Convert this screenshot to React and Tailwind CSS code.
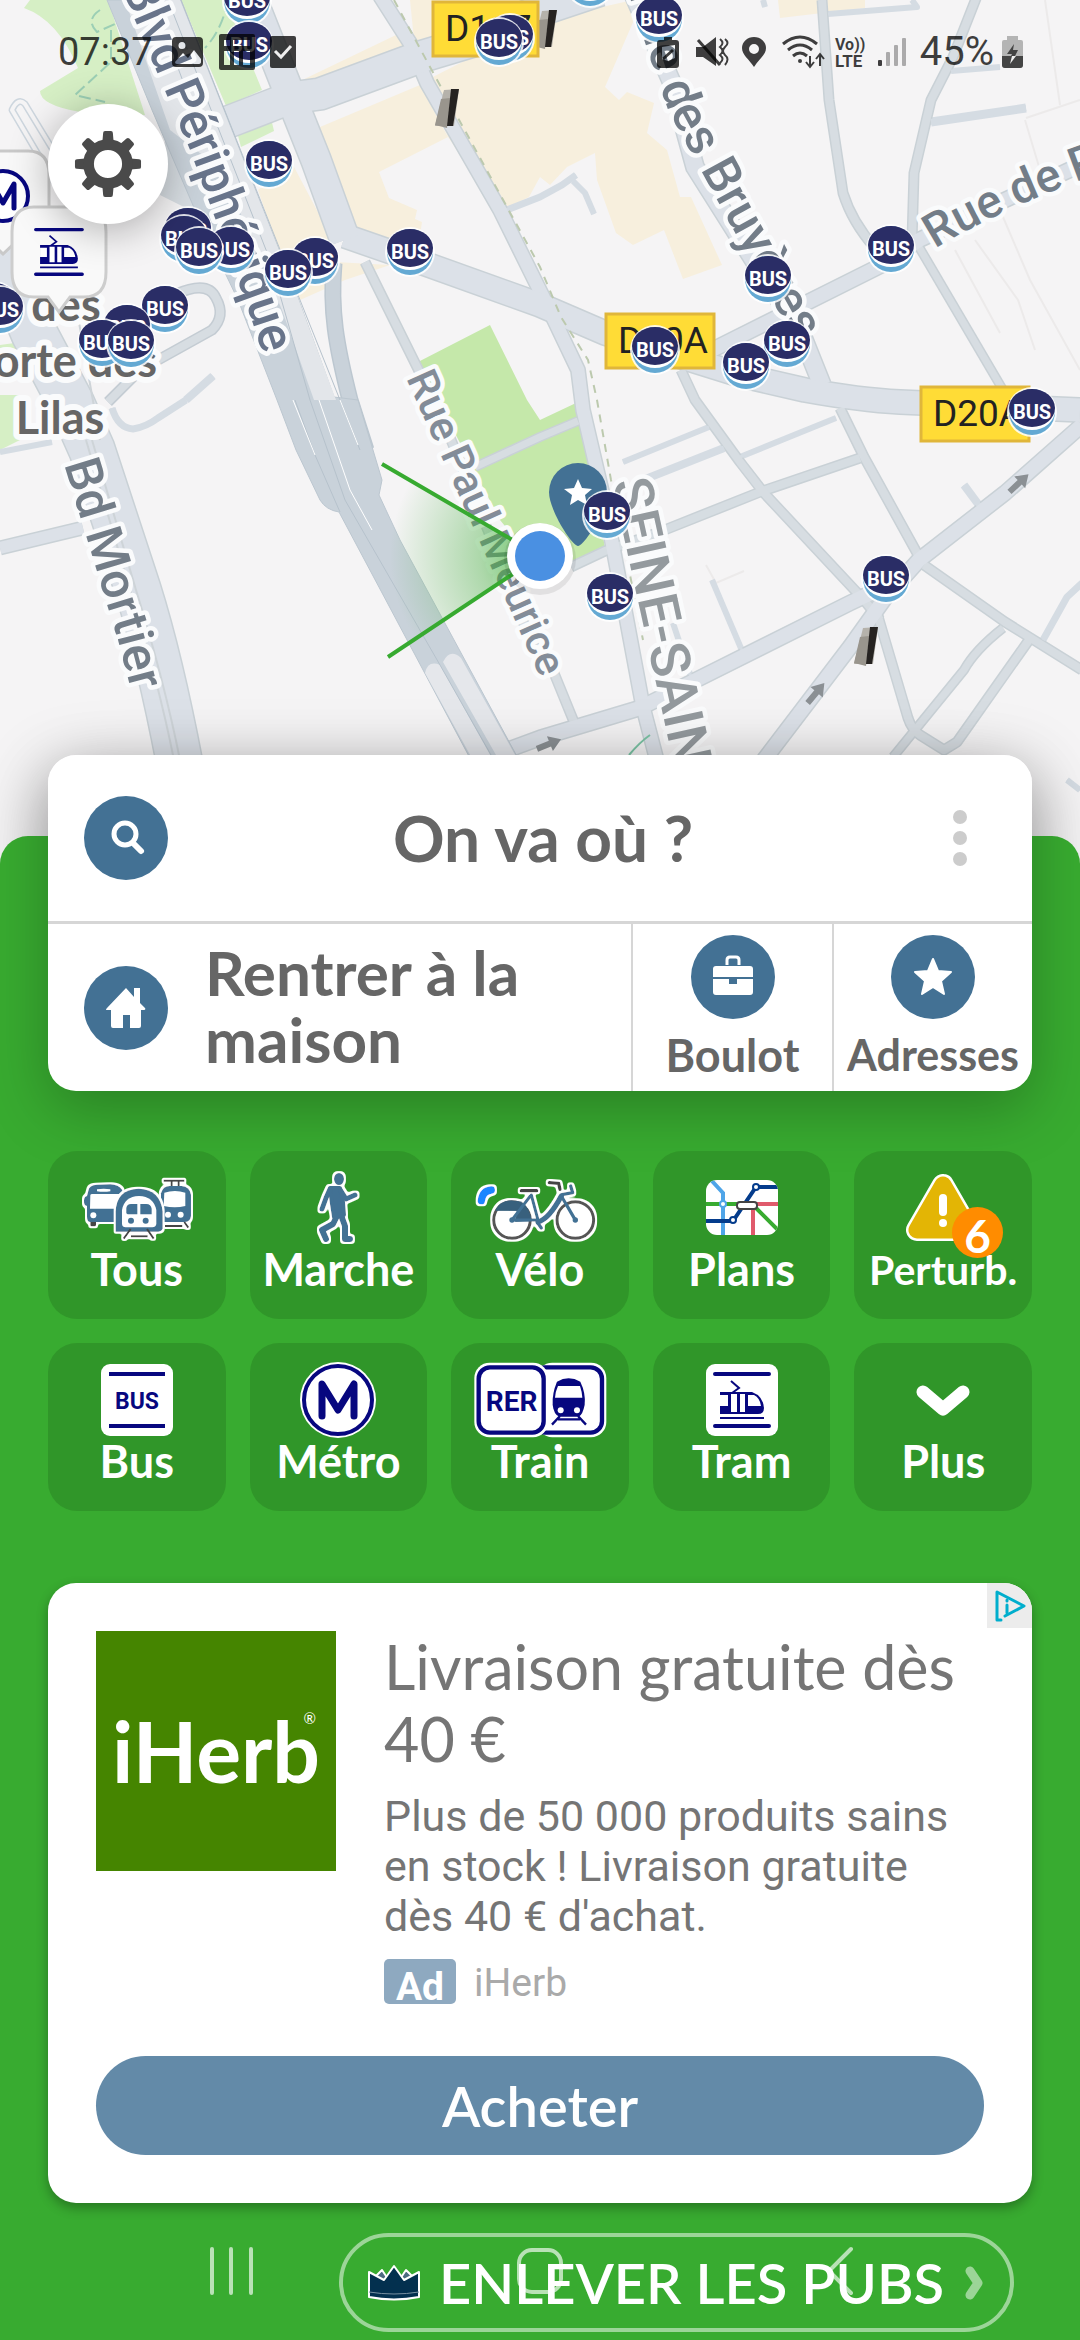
import React from "react";

const NAVY = "#07077f";
const STEEL = "#437194";

/* ---------- Map ---------- */

const roads = [
  // [path, width, fill, casing]
  ["M0 548 L83 528", 13, "#dce1e8", "#c9d1d6"],
  ["M0 452 L52 442", 4, "#d5dce3", "#d5dce3"],
  ["M112 408 Q118 428 133 429 Q146 427 158 418 L186 400", 5, "#d5dce3", "#d5dce3"],
  ["M108 402 L140 370 L212 330 Q226 316 216 298 Q208 280 176 294 L150 316", 9, "#d7dde2", "#c4ccd3"],
  ["M186 400 L213 376", 6, "#d5dce3", "#d5dce3"],
  ["M62 195 L12 110 Q18 97 25 104 L56 155", 5, "#f5f4f5", "#cdd6de"],
  ["M365 262 L420 373 L447 430 L500 560 L530 640 L554 673 L576 727", 9, "#d7dde2", "#c9d1d6"],
  ["M475 467 L540 437 L578 421", 8, "#d7dde2", "#c9d1d6"],
  ["M571 567 L605 551 L657 533 L760 492 L860 458", 9, "#d6dde2", "#c9d1d6"],
  ["M623 462 L709 427", 4, "#d5dce3", "#d5dce3"],
  ["M643 480 L724 448", 6, "#d5dce3", "#d5dce3"],
  ["M740 457 L836 418", 4, "#d5dce3", "#d5dce3"],
  ["M712 580 L743 653", 4, "#d5dce3", "#d5dce3"],
  ["M673 623 L693 683", 4, "#d5dce3", "#d5dce3"],
  ["M964 485 L981 508", 6, "#d5dce3", "#d5dce3"],
  ["M1043 640 L1067 597 L1082 583", 5, "#d5dce3", "#d5dce3"],
  ["M931 122 L1026 108", 7, "#d5dce3", "#d5dce3"],
  ["M951 71 L1000 67", 4, "#d5dce3", "#d5dce3"],
  ["M828 14 L917 7 L912 0", 4, "#d5dce3", "#d5dce3"],
  ["M763 0 L765 7", 4, "#d5dce3", "#d5dce3"],
  ["M499 213 L540 197 L562 185 L576 175", 5, "#d5dce3", "#d5dce3"],
  ["M573 181 L585 193 L594 214", 4, "#d5dce3", "#d5dce3"],
  ["M1067 780 L1080 790", 4, "#d5dce3", "#d5dce3"],
  ["M334 263 C330 310 336 345 350 400 L366 450", 15, "#c9d2da", "#bcc7d0"],
  ["M822 0 L829 100 L843 193 Q852 222 875 248", 9, "#d7dde2", "#c9d1d6"],
  ["M977 -4 L953 57 L931 100 L914 173 L912 240", 9, "#d7dde2", "#c9d1d6"],
  ["M919 247 L1003 390", 8, "#d7dde2", "#c9d1d6"],
  ["M681 370 L695 400 L740 462 L764 493 L864 600 L880 620", 9, "#d7dde2", "#c9d1d6"],
  ["M840 408 L864 457 L922 562", 9, "#d7dde2", "#c9d1d6"],
  ["M877 613 L908 718 Q912 730 920 735 L944 750 L957 742 L1029 640", 9, "#d7dde2", "#c9d1d6"],
  ["M893 757 L964 670 Q975 650 1003 628", 8, "#d7dde2", "#c9d1d6"],
  ["M924 565 L1005 622 L1082 670", 9, "#d7dde2", "#c9d1d6"],
  ["M380 -4 L410 43 L427 83 L500 210 L547 305 L578 370 L583 410 L604 500 L623 600 L643 707 L656 757", 14, "#dce1e8", "#c9d1d6"],
  ["M480 760 L540 738 L640 708 L850 603 L888 585", 15, "#dce1e8", "#c9d1d6"],
  ["M764 760 L850 647 L885 598 L919 560 L1005 493 L1082 425", 15, "#dce1e8", "#c9d1d6"],
  ["M0 253 L34 333 L72 405 L92 450 L138 590 Q160 660 180 765", 46, "#dce1e8", "#c9d1d6"],
  ["M712 350 L884 264 L919 240 L1080 165", 15, "#dce1e8", "#c9d1d6"],
  ["M634 -4 L672 83 L695 167 L760 270 L802 335 L822 385", 18, "#dce1e8", "#c9d1d6"],
  ["M345 236 L420 262 L540 305 L605 333 L740 375 L805 390 Q860 400 900 402 L1080 410", 24, "#dce1e8", "#c9d1d6"],
  ["M250 -6 L290 95 L316 160 L345 240", 30, "#dce1e8", "#c9d1d6"],
  ["M228 122 L290 98 L320 94 L420 57 L470 42 L540 10 L600 -10", 32, "#dce1e8", "#c9d1d6"],
];

const busStops = [
  [247, 1], [249, 45], [510, 38], [499, 42], [269, 164], [188, 231], [184, 239], [231, 250], [199, 251],
  [315, 261], [288, 273], [410, 252], [-6, 306], [0, 310], [165, 309], [127, 328], [102, 343], [131, 344],
  [590, -17], [659, 19], [891, 249], [768, 279], [655, 350], [787, 344], [746, 366], [1032, 412],
  [607, 515], [610, 597], [886, 579],
];

function BusStop({ x, y }) {
  return (
    <g transform={`translate(${x} ${y})`}>
      <circle r="25" fill="#fff" opacity="0.85" />
      <circle r="23" fill="#64a9d3" />
      <ellipse cy="-2" rx="23" ry="20" fill="#fff" />
      <ellipse cy="-4" rx="23" ry="19" fill="#2a2d66" />
      <text y="7" textAnchor="middle" fontSize="20" fontWeight="700" fill="#fff">BUS</text>
    </g>
  );
}

function RoadTag({ x, y, w, children }) {
  return (
    <g>
      <rect x={x} y={y} width={w} height="54" fill="#ffdc36" stroke="#e0b63a" strokeWidth="3" />
      <text x={x + 12} y={y + 39} fontSize="37" fill="#222">{children}</text>
    </g>
  );
}

function Arrow({ x, y, turn }) {
  return (
    <g transform={`translate(${x} ${y}) rotate(${turn})`} fill="#8b9094">
      <path d="M-13 -3 H1 V-8 L13 0 L1 8 V3 H-13 Z" />
    </g>
  );
}

function Pillar({ x, y }) {
  return (
    <g transform={`translate(${x} ${y})`}>
      <path d="M-3 -18 L12 -19 L7 18 L-12 18 Z" fill="#b5b2ab" />
      <path d="M-6 -9 L3 -10 L0 20 L-12 17 Z" fill="#99958d" />
      <path d="M4 -19 L12 -19 L6 18 L0 18 Z" fill="#262321" />
    </g>
  );
}

function TramGlyph() {
  return (
    <g>
      <path d="M9 10 H63 M9 62 H63" stroke={NAVY} strokeWidth="4" strokeLinecap="round" />
      <path d="M25 17 L33 24 L26 29" fill="none" stroke={NAVY} strokeWidth="2" />
      <path d="M14 28 H46 Q57 32 58 44 Q58 50 52 50 H14 Z" fill={NAVY} />
      <path d="M14 31 H22 V42 H14 Z M25 30 H31 V48 H25 Z M34 30 H39 V48 H34 Z M42 31 H48 Q54 34 55 42 H42 Z" fill="#fff" />
      <path d="M14 54 H58" stroke={NAVY} strokeWidth="2" />
    </g>
  );
}

function CityMap() {
  return (
    <svg className="block h-[880px] w-full" viewBox="0 0 1080 880" preserveAspectRatio="xMidYMin slice" fontFamily="Roboto, sans-serif" role="img" aria-label="Plan du quartier">
      <defs>
        <radialGradient id="cone" gradientUnits="userSpaceOnUse" cx="540" cy="556" r="150">
          <stop offset="0" stopColor="#37aa30" stopOpacity="0.75" />
          <stop offset="0.4" stopColor="#37aa30" stopOpacity="0.38" />
          <stop offset="1" stopColor="#37aa30" stopOpacity="0" />
        </radialGradient>
        <path id="st-periph" d="M121 -13 L190 150 L245 300 L285 420" />
        <path id="st-bruyeres" d="M628 -8 L668 110 L728 220 L800 350" />
        <path id="st-rue-r" d="M935 249 Q1000 208 1120 166" />
        <path id="st-meurice" d="M406 378 L470 520 L555 710" />
        <path id="st-mortier" d="M64 464 L118 640 L144 740" />
        <path id="st-seine" d="M612 482 L700 885" />
      </defs>
      <rect width="1080" height="880" fill="#f5f4f5" />
      <g fill="#f7efdd">
        <path d="M320 127 L420 85 L448 137 L379 172 L389 198 L417 210 L415 219 L422 222 L420 235 L389 238 L352 227 L315 133 Z" />
        <path d="M423 82 L545 20 L633 0 L634 20 L605 87 L619 100 L627 92 L654 103 L647 133 L667 150 L680 197 L691 197 L722 265 L683 279 L664 230 L633 245 L616 233 L597 180 L595 153 L567 167 L550 185 L540 177 L529 197 L499 212 L448 137 Z" />
        <path d="M296 83 L396 35 L410 50 L310 95 Z M410 0 H540 V20 L415 50 Z" />
        <path d="M258 190 L293 165 L330 235 L335 262 L390 265 L345 280 L300 300 L275 240 Z" />
        <path d="M778 0 H865 V8 L780 18 Z" />
      </g>
      <path d="M24 8 L30 0 L108 0 L145 115 L80 112 Q40 105 40 91 L78 68 Q58 20 24 8 Z M181 0 H225 L262 90 L226 106 Z M236 128 L270 114 L274 131 L241 147 Z M0 395 H20 V440 L0 450 Z M0 345 L22 342 L26 350 L0 360 Z" fill="#d6efc5" />
      <path d="M100 10 Q85 20 97 32 L117 23 M111 30 V62 L75 95 L105 102 M228 0 Q222 30 205 48" fill="none" stroke="#9ccfb5" strokeWidth="2" strokeDasharray="12 5" />
      <path d="M490 325 L527 400 L540 420 L576 403 L605 547 L574 562 L545 575 L500 520 L418 362 Z" fill="#c5e8aa" />
      <path d="M955 250 L1000 333 M975 240 L1018 300 L1035 350 M1000 210 L1030 280 L1080 370 M1025 120 L1040 170 M1026 118 L1080 100 M1045 0 L1060 105 M706 565 L716 583 L744 571" fill="none" stroke="#eceaea" strokeWidth="2" />
      {roads.map(([d, w, , casing], i) => (
        <path key={i} d={d} fill="none" stroke={casing} strokeWidth={w + 2} strokeLinejoin="round" />
      ))}
      {roads.map(([d, w, fill], i) => (
        <path key={i} d={d} fill="none" stroke={fill} strokeWidth={w - 1} strokeLinejoin="round" />
      ))}
      <path d="M75 300 L100 440 M86 440 L130 590 Q158 680 174 760 M92 440 L136 590 Q164 680 180 760" fill="none" stroke="#ced4d8" strokeWidth="2" />
      <path d="M165 140 L175 130 L210 220 L190 210 L160 195 Z" fill="#d7dde2" />
      <path d="M107 0 H181 L298 298 L334 397 L358 400 L370 440 L382 480 L379 495 L400 540 L520 762 H472 L339 512 Q326 510 320 500 L296 450 L277 400 L238 300 L195 210 L152 110 Z" fill="#c9d2da" stroke="#bcc7d0" strokeWidth="1" />
      <path d="M125 0 H180 L298 298 L336 400 H314 L282 310 L222 170 L170 130 Z" fill="#e3e6ea" />
      <path d="M425 673 Q428 660 440 665 L494 762 H474 Z M443 662 Q450 648 461 658 L519 762 H500 Z" fill="#e5e7eb" />
      <path d="M168 0 L270 260 L310 400 L345 500 L440 665 L495 762 M181 0 L300 300 L340 400 M160 20 L250 260 M295 400 L315 455 L340 512 M340 400 L360 450" fill="none" stroke="#b6c2cc" strokeWidth="1" />
      <path d="M293 400 L315 455 M319 400 L350 490 L372 530 M340 400 L358 445" fill="none" stroke="#fff" strokeWidth="1" />
      <path d="M394 0 L430 67 L540 267 L561 317 L588 360 L597 400 L611 480 L643 640" fill="none" stroke="#bcc9ae" strokeWidth="2" strokeDasharray="8 7" />
      <path d="M629 755 Q640 742 650 735" fill="none" stroke="#7cc4a5" strokeWidth="2" />
      <Arrow x={1019} y={483} turn={-43} />
      <Arrow x={816} y={693} turn={-50} />
      <Arrow x={549} y={744} turn={-22} />
      <Pillar x={447} y={108} />
      <Pillar x={545} y={29} />
      <Pillar x={866} y={646} />

      <g fontWeight="500" stroke="#fafbfc" strokeWidth="9" strokeLinejoin="round" style={{ paintOrder: "stroke" }}>
        <g fontSize="50">
          <text fill="#68748a"><textPath href="#st-periph">Blvd Périphérique</textPath></text>
          <text fill="#737d88"><textPath href="#st-bruyeres">Rue des Bruyères</textPath></text>
          <text fill="#737d88"><textPath href="#st-mortier">Bd Mortier</textPath></text>
        </g>
        <text fill="#737d88" fontSize="47"><textPath href="#st-rue-r">Rue de Romainville</textPath></text>
        <text fill="#838c98" fontSize="42"><textPath href="#st-meurice">Rue Paul Meurice</textPath></text>
        <text fill="#949a9e" fontSize="55"><textPath href="#st-seine">SEINE-SAINT-DENIS</textPath></text>
        <g fill="#666" fontSize="45" fontWeight="700" fontFamily="Lato, sans-serif" strokeWidth="12" textAnchor="middle">
          <text x="66" y="321">des</text>
          <text x="62" y="377">Porte des</text>
          <text x="60" y="434">Lilas</text>
        </g>
      </g>

      <RoadTag x={433} y={2} w={105}>D117</RoadTag>
      <RoadTag x={606} y={314} w={108}>D20A</RoadTag>
      <RoadTag x={921} y={387} w={108}>D20A</RoadTag>

      <path d="M540 556 L382 464 L388 657 Z" fill="url(#cone)" />
      <path d="M382 464 L540 556 L388 657" fill="none" stroke="#37aa30" strokeWidth="4" />
      <path d="M578 546 C572 546 549 510 549 492 A29 29 0 0 1 607 492 C607 510 584 546 578 546 Z" fill={STEEL} />
      <path d="M578 479 L582 488 L592 489 L585 495 L587 505 L578 500 L570 505 L572 495 L564 489 L574 488 Z" fill="#fff" />
      <g>{busStops.map(([x, y], i) => <BusStop key={i} x={x} y={y} />)}</g>
      <circle cx="540" cy="559" r="36" fill="#000" opacity="0.08" />
      <circle cx="540" cy="556" r="33" fill="#fff" />
      <circle cx="540" cy="556" r="25" fill="#4a90e2" />

      <g>
        <path d="M-38 151 H28 Q49 151 49 175 V215 Q49 238 20 238 L3 254 L-14 238 H-38 Z" fill="#f8f8f8" stroke="#c9c9c9" strokeWidth="3" />
        <circle cx="3" cy="196" r="25" fill="#fff" stroke={NAVY} strokeWidth="4" />
        <path d="M-8 208 V184 L3 203 L14 184 V208" fill="none" stroke={NAVY} strokeWidth="5" strokeLinejoin="round" strokeLinecap="round" />
        <path d="M34 207 H84 Q106 207 106 232 V272 Q106 297 84 297 H70 L59 312 L48 297 H34 Q12 297 12 272 V232 Q12 207 34 207 Z" fill="#f9f9f9" stroke="#cdcdcd" strokeWidth="3" />
        <g transform="translate(28 221) scale(.86)"><TramGlyph /></g>
      </g>
    </svg>
  );
}

/* ---------- Status bar ---------- */

function StatusBar() {
  return (
    <div className="absolute inset-x-0 top-0 flex h-[104px] items-center justify-between pr-[57px] pl-[58px] text-[38px] text-black/75">
      <div className="flex items-center gap-[15px] font-[Roboto]">
        <span className="mr-1">07:37</span>
        <svg width="32" height="32" viewBox="0 0 32 32">
          <path fillRule="evenodd" fill="currentColor" d="M4 1 H27 Q31 1 31 5 V27 Q31 31 27 31 H4 Q0 31 0 27 V5 Q0 1 4 1 Z M3 26 L11 17 L16 22 L22 14 L29 23 V26 Q29 28 26 28 H5 Q3 28 3 26 Z M10 6 A3 3 0 1 0 10 13 A3 3 0 1 0 10 6 Z" />
        </svg>
        <svg width="36" height="36" viewBox="0 0 36 36">
          <path fillRule="evenodd" fill="currentColor" d="M2 0 H34 Q36 0 36 2 V34 Q36 36 34 36 H2 Q0 36 0 34 V2 Q0 0 2 0 Z M5 6 H11 V12 H5 Z M14 6 H31 V12 H14 Z M5 17 H11 V31 H5 Z M15 17 H20 V31 H15 Z M24 17 H31 V31 H24 Z" />
        </svg>
        <svg width="26" height="34" viewBox="0 0 26 34">
          <rect y="1" width="26" height="32" rx="2" fill="currentColor" />
          <path d="M5 16 L11 22 L21 11" fill="none" stroke="#eee" strokeWidth="3" />
        </svg>
      </div>
      <div className="flex items-center font-[Roboto]">
        <svg width="250" height="36" viewBox="648 33 250 36" fill="currentColor">
          <path fillRule="evenodd" d="M652 39 H656 V36 H664 V39 H668 Q671 39 671 42 V64 Q671 67 668 67 H652 Q649 67 649 64 V42 Q649 39 652 39 Z M654 46 V58 L660 60 L667 57 V44 Z" />
          <path d="M655 58 L665 49" stroke="currentColor" strokeWidth="3" />
          <path d="M688 46 H695 L708 36 V65 L695 56 H688 Z" />
          <path d="M690 39 L712 64" stroke="currentColor" strokeWidth="3" />
          <path d="M712 38 q5 4 0 8 q5 4 0 8 q5 4 0 8 M717 38 q5 4 0 8 q-4 4 0 8 q5 4 0 10" fill="none" stroke="currentColor" strokeWidth="2" />
          <path fillRule="evenodd" d="M746 66 C741 58 734 54 734 47 A12 11 0 0 1 758 47 C758 54 751 58 746 66 Z M746 43 A5 5 0 1 0 746 53 A5 5 0 1 0 746 43 Z" />
          <path d="M775 43 Q792 29 809 43 M780 49 Q792 39 804 49 M785 55 Q792 49 799 55" fill="none" stroke="currentColor" strokeWidth="3" />
          <circle cx="792" cy="60" r="2" />
          <path d="M802 55 V65 M798 61 L802 66 L806 61 M812 65 V54 M808 58 L812 53 L816 58" fill="none" stroke="currentColor" strokeWidth="2" />
          <text x="827" y="49" fontSize="16" fontWeight="700">Vo))</text>
          <text x="827" y="66" fontSize="17" fontWeight="700">LTE</text>
          <rect x="870" y="59" width="4" height="6" rx="1" />
          <g opacity="0.4"><rect x="878" y="51" width="4" height="14" rx="1" /><rect x="886" y="44" width="4" height="21" rx="1" /><rect x="894" y="37" width="4" height="28" rx="1" /></g>
        </svg>
        <span className="ml-[14px] text-[40px]">45%</span>
        <svg className="ml-[8px]" width="21" height="32" viewBox="0 0 21 32">
          <path d="M5 0 H16 V4 H19 Q21 4 21 6 V29 Q21 32 18 32 H3 Q0 32 0 29 V6 Q0 4 2 4 H5 Z" fill="#b4b4b4" />
          <path d="M0 20 H21 V29 Q21 32 18 32 H3 Q0 32 0 29 Z" fill="#444" />
          <path d="M12 8 L5 18 H10 L9 20 H13 L16 14 H11 Z" fill="#444" />
          <path d="M10 20 H14 L8 28 Z" fill="#eee" />
        </svg>
      </div>
    </div>
  );
}

function GearIcon() {
  return (
    <svg width="68" height="70" viewBox="-35 -35 70 70" fill="#4a4a4a">
      {[0, 45, 90, 135, 180, 225, 270, 315].map((a) => (
        <path key={a} transform={`rotate(${a})`} d="M-6 -20 L-5 -32 Q-5 -34 -3 -34 H3 Q5 -34 5 -32 L6 -20 Z" />
      ))}
      <circle r="20" fill="none" stroke="#4a4a4a" strokeWidth="11" />
    </svg>
  );
}

/* ---------- Tile icons ---------- */

function Halo() {
  return (
    <svg className="absolute h-0 w-0" aria-hidden="true">
      <filter id="halo" x="-20%" y="-20%" width="140%" height="140%">
        <feMorphology in="SourceAlpha" operator="dilate" radius="2" result="grown" />
        <feGaussianBlur in="grown" stdDeviation="1" result="soft" />
        <feComponentTransfer in="soft" result="edge"><feFuncA type="linear" slope="3" intercept="-1" /></feComponentTransfer>
        <feFlood floodColor="#fff" />
        <feComposite in2="edge" operator="in" result="white" />
        <feMerge><feMergeNode in="white" /><feMergeNode in="SourceGraphic" /></feMerge>
      </filter>
    </svg>
  );
}

const AllIcon = () => (
  <svg width="130" height="80" viewBox="0 0 130 80">
    <g filter="url(#halo)">
      <g transform="translate(-1 -8) scale(.3333)">
        <rect x="58" y="182" width="17" height="17" rx="4" fill="#444" />
        <path d="M52 92 Q54 76 78 74 L118 73 Q142 74 154 90 L154 186 H58 Q48 186 48 170 V138 Q38 136 39 122 Q39 110 48 108 Z" fill={STEEL} />
        <path d="M58 106 Q58 102 64 102 H150 V146 H57 Z M78 88 Q98 84 118 88 V94 Q98 97 78 94 Z" fill="#fff" />
        <circle cx="67" cy="166" r="9" fill="#fff" />
        <path d="M278 62 H340 M302 62 V80 M323 62 V80 M282 198 H334 M340 186 L352 203" stroke="#444" strokeWidth="6" />
        <path d="M270 100 Q276 78 296 78 H332 Q356 80 360 104 V168 Q358 186 340 186 H270 Z" fill={STEEL} />
        <path d="M280 98 Q312 88 343 98 V138 Q312 146 278 138 Z" fill="#fff" />
        <circle cx="291" cy="164" r="9" fill="#fff" /><circle cx="329" cy="164" r="9" fill="#fff" />
      </g>
    </g>
    <g filter="url(#halo)">
      <g transform="translate(-1 -8) scale(.3333)">
        <path d="M134 215 V155 Q136 88 203 86 Q268 88 275 155 V205 Q272 215 262 215 Z" fill={STEEL} />
        <path d="M153 192 V150 Q160 110 204 108 Q248 110 256 150 V192 Q254 202 244 202 H164 Q154 202 153 192 Z" fill="#fff" />
        <path d="M166 160 V144 Q168 132 180 132 H199 V163 H170 Z M208 132 H226 Q240 132 242 146 V163 H208 Z" fill={STEEL} />
        <circle cx="180" cy="182" r="9" fill={STEEL} /><circle cx="224" cy="182" r="9" fill={STEEL} />
        <path d="M179 207 L158 236 M228 207 L248 236 M180 229 H230" stroke="#444" strokeWidth="6" />
      </g>
    </g>
  </svg>
);

const WalkIcon = () => (
  <svg width="60" height="80" viewBox="0 0 60 80">
    <g filter="url(#halo)" fill={STEEL} stroke={STEEL} strokeLinejoin="round" strokeLinecap="round">
      <ellipse cx="31" cy="11" rx="4" ry="5" strokeWidth="2" />
      <path d="M22 20 L32 20 L35 34 L36 47 L26 49 L24 36 Z" strokeWidth="4" />
      <path d="M22 21 L18 30 L14 41 M33 23 L38 31 L47 27" fill="none" strokeWidth="5" />
      <path d="M29 48 L25 56 L14 62 L18 71 M33 47 L37 58 L37 71 L42 71" fill="none" strokeWidth="6" />
    </g>
  </svg>
);

const BikeIcon = () => (
  <svg width="150" height="80" viewBox="0 0 150 80">
    <g filter="url(#halo)">
      <g transform="translate(-3 -8) scale(.3333)" fill="none" strokeLinecap="round" strokeLinejoin="round">
        <circle cx="150" cy="180" r="55" fill="#fff" stroke="#555" strokeWidth="9" />
        <circle cx="340" cy="180" r="55" fill="#fff" stroke="#555" strokeWidth="9" />
        <path d="M102 150 Q108 126 145 122 L178 126 Q200 140 208 182 L160 184 L166 152 Z" fill="#38607d" stroke="#38607d" strokeWidth="3" />
        <path d="M150 180 L205 108 M150 180 H228 L208 105" stroke={STEEL} strokeWidth="9" />
        <path d="M228 186 Q262 176 298 108" stroke={STEEL} strokeWidth="16" />
        <path d="M298 108 L340 180 M326 78 L332 98 L300 104 M228 190 L238 204" stroke={STEEL} strokeWidth="10" />
        <path d="M178 92 H224 M262 68 L290 70 L294 88" stroke="#444" strokeWidth="10" />
        <circle cx="340" cy="180" r="8" fill={STEEL} /><circle cx="150" cy="180" r="8" fill={STEEL} />
        <path d="M58 122 Q62 92 88 90" stroke="#1f86ff" strokeWidth="22" />
      </g>
    </g>
  </svg>
);

const PlansIcon = () => (
  <svg width="72" height="56" viewBox="0 0 72 56">
    <clipPath id="plan"><rect width="72" height="55" rx="11" /></clipPath>
    <g clipPath="url(#plan)" fill="none" strokeWidth="4">
      <rect width="72" height="55" fill="#fff" />
      <path d="M0 24 H40 M50 28 L72 50" stroke="#38ab30" /><path d="M50 24 H72 M47 27 V55" stroke="#e05a6c" />
      <path d="M5 0 L17 13 V55" stroke="#4fa5e8" /><path d="M0 41 H27 L50 7 H72" stroke="#043c8c" />
      <circle cx="17" cy="24" r="3" fill="#fff" stroke="#4fa5e8" strokeWidth="2" />
      <circle cx="27" cy="40" r="3" fill="#fff" stroke="#043c8c" strokeWidth="2" />
      <circle cx="50" cy="7" r="3" fill="#fff" stroke="#043c8c" strokeWidth="2" />
      <rect x="31" y="22" width="20" height="7" rx="3" fill="#fff" stroke="#444" strokeWidth="2" />
    </g>
  </svg>
);

const WarningIcon = () => (
  <div className="relative">
    <svg width="74" height="68" viewBox="0 0 74 68">
      <path d="M37 11 L11 56 H63 Z" stroke="#fff" strokeWidth="22" strokeLinejoin="round" fill="#fff" />
      <path d="M37 11 L11 56 H63 Z" stroke="#e3b505" strokeWidth="17" strokeLinejoin="round" fill="#e3b505" />
      <path d="M37 24 V38" stroke="#fff" strokeWidth="8" strokeLinecap="round" /><circle cx="37" cy="49" r="4" fill="#fff" />
    </svg>
    <span className="absolute -right-[23px] -bottom-[16px] flex size-[51px] items-center justify-center rounded-full bg-[#ff8c00] pt-[6px] text-[46px] leading-[46px]">6</span>
  </div>
);

const BusIcon = () => (
  <svg width="72" height="72" viewBox="0 0 72 72">
    <rect width="72" height="72" rx="9" fill="#fff" />
    <path d="M8 10 H64 M8 62 H64" stroke={NAVY} strokeWidth="4" />
    <text x="36" y="45" textAnchor="middle" fontFamily="Roboto, sans-serif" fontWeight="700" fontSize="23" fill={NAVY}>BUS</text>
  </svg>
);

const MetroIcon = () => (
  <svg width="78" height="78" viewBox="0 0 78 78">
    <circle cx="39" cy="39" r="38" fill="#fff" />
    <circle cx="39" cy="39" r="34" fill="#fff" stroke={NAVY} strokeWidth="4" />
    <path d="M23 55 V23 L39 49 L55 23 V55" fill="none" stroke={NAVY} strokeWidth="7" strokeLinejoin="round" strokeLinecap="round" />
  </svg>
);

const TrainIcon = () => (
  <svg width="150" height="80" viewBox="0 0 150 80">
    <g transform="translate(-3 -10) scale(.3333)">
      <rect x="225" y="38" width="208" height="224" rx="46" fill="#fff" />
      <rect x="215" y="52" width="205" height="196" rx="34" fill="#fff" stroke={NAVY} strokeWidth="13" />
      <rect x="37" y="38" width="222" height="224" rx="46" fill="#fff" />
      <rect x="50" y="52" width="195" height="196" rx="34" fill="#fff" stroke={NAVY} strokeWidth="13" />
      <text x="149" y="183" textAnchor="middle" fontFamily="Roboto, sans-serif" fontWeight="700" fontSize="84" fill={NAVY}>RER</text>
      <path d="M285 95 Q320 75 355 95 Q372 130 368 165 Q362 195 350 200 H292 Q276 195 272 165 Q270 130 285 95 Z" fill={NAVY} />
      <path d="M288 108 H354 Q360 125 361 143 H279 Q280 125 288 108 Z" fill="#fff" />
      <circle cx="296" cy="181" r="9" fill="#fff" /><circle cx="345" cy="181" r="9" fill="#fff" />
      <path d="M294 198 L270 224 M348 198 L372 224 M288 208 H354" stroke={NAVY} strokeWidth="7" />
    </g>
  </svg>
);

const TramIcon = () => (
  <svg width="72" height="72" viewBox="0 0 72 72"><rect width="72" height="72" rx="9" fill="#fff" /><TramGlyph /></svg>
);

const PlusIcon = () => (
  <svg width="56" height="36" viewBox="0 0 56 36">
    <path d="M8 10 L28 27 L48 10" fill="none" stroke="#fff" strokeWidth="13" strokeLinecap="round" strokeLinejoin="round" />
  </svg>
);

const tiles = [
  ["Tous", AllIcon], ["Marche", WalkIcon], ["Vélo", BikeIcon], ["Plans", PlansIcon], ["Perturb.", WarningIcon],
  ["Bus", BusIcon], ["Métro", MetroIcon], ["Train", TrainIcon], ["Tram", TramIcon], ["Plus", PlusIcon],
];

function Tile({ label, Icon }) {
  return (
    <button className="flex h-[168px] flex-col items-center rounded-[29px] bg-[#309629] pt-[17px] font-bold text-white">
      <span className="flex h-[80px] items-center justify-center"><Icon /></span>
      <span className={label === "Perturb." ? "text-[41px] leading-[44px]" : "text-[45px] leading-[42px]"}>{label}</span>
    </button>
  );
}

function Round({ children }) {
  return (
    <span className="flex size-[84px] shrink-0 items-center justify-center rounded-full bg-[#437194] text-white">
      <svg width="44" height="44" viewBox="0 0 44 44" fill="currentColor">{children}</svg>
    </span>
  );
}

function SearchCard() {
  return (
    <section className="relative mx-[48px] -mt-[81px] overflow-hidden rounded-[28px] bg-white font-bold text-[#666]">
      <div className="flex h-[169px] items-center border-b-[3px] border-[#d6d6d6] pr-[50px] pl-[36px]">
        <button className="flex flex-1 items-center">
          <Round>
            <circle cx="21" cy="18" r="11" fill="none" stroke="currentColor" strokeWidth="5" />
            <path d="M29 27 L37 35" stroke="currentColor" strokeWidth="6" strokeLinecap="round" />
          </Round>
          <span className="flex-1 pr-[20px] text-center text-[64px] leading-[72px]">On va où ?</span>
        </button>
        <button aria-label="Options" className="flex w-[44px] flex-col items-center gap-[7px]">
          <span className="size-[14px] rounded-full bg-[#ccc]" />
          <span className="size-[14px] rounded-full bg-[#ccc]" />
          <span className="size-[14px] rounded-full bg-[#ccc]" />
        </button>
      </div>
      <div className="grid h-[167px] grid-cols-[1fr_201px_200px]">
        <button className="flex items-center gap-[37px] pl-[36px] text-left text-[62px] leading-[67px]">
          <Round>
            <path d="M22 2 L30 11 V2 H36 V17 L41 22 Q42 24 40 24 H37 V40 Q37 42 35 42 H26 V29 H19 V42 H9 Q7 42 7 40 V24 H3 Q1 24 3 22 Z" />
          </Round>
          <span className="pb-[4px]">Rentrer à la maison</span>
        </button>
        <button className="flex flex-col items-center border-l-2 border-[#d6d6d6] pt-[11px] text-[45px] leading-[56px]">
          <Round>
            <path d="M16 10 V5 Q16 2 19 2 H25 Q28 2 28 5 V10" fill="none" stroke="currentColor" strokeWidth="3" />
            <path d="M5 11 H39 Q42 11 42 14 V22 H2 V14 Q2 11 5 11 Z M2 24 H18 V29 H26 V24 H42 V37 Q42 40 39 40 H5 Q2 40 2 37 Z" />
          </Round>
          <span className="mt-[8px]">Boulot</span>
        </button>
        <button className="flex flex-col items-center border-l-2 border-[#d6d6d6] pt-[11px] text-[43px] leading-[56px]">
          <Round>
            <path d="M22 4 L27 16 L40 17 L30 26 L33 39 L22 32 L11 39 L14 26 L4 17 L17 16 Z" stroke="currentColor" strokeWidth="2" strokeLinejoin="round" />
          </Round>
          <span className="mt-[8px]">Adresses</span>
        </button>
      </div>
    </section>
  );
}

function AdCard() {
  return (
    <section className="relative mx-[48px] mt-[72px] flex flex-col overflow-hidden rounded-[28px] bg-white px-[48px] pt-[48px] pb-[48px] shadow-[0_5px_12px_rgba(0,0,0,0.3)]">
      <span className="absolute top-0 right-0 flex h-[45px] w-[45px] items-center justify-center bg-[#ececec]">
        <svg width="32" height="34" viewBox="0 0 32 34" fill="none" stroke="#00aecd" strokeWidth="3" strokeLinejoin="round" strokeLinecap="round">
          <path d="M7 31 H3 V3 L30 17 L11 27" /><path d="M13 16 V24 M13 11 V12" />
        </svg>
      </span>
      <div className="flex gap-[48px]">
        <div className="relative flex size-[240px] shrink-0 items-center justify-center bg-[#458500] text-white">
          <span className="text-[84px] leading-none font-bold">iHerb</span>
          <span className="absolute top-[80px] right-[20px] text-[15px] leading-none">®</span>
        </div>
        <div className="flex flex-col text-[#757575]">
          <h2 className="text-[61px] leading-[72px]">Livraison gratuite dès 40 €</h2>
          <p className="mt-[16px] pr-[16px] font-[Roboto] text-[43px] leading-[50px]">Plus de 50 000 produits sains en stock ! Livraison gratuite dès 40 € d'achat.</p>
          <div className="mt-[18px] flex items-center gap-[18px] font-[Roboto]">
            <span className="flex h-[45px] w-[72px] items-end justify-center overflow-hidden rounded-[5px] bg-[#8ea9c0] text-[39px] leading-[34px] font-bold text-white">Ad</span>
            <span className="pt-[3px] text-[39px] leading-[42px] text-[#aaa]">iHerb</span>
          </div>
        </div>
      </div>
      <button className="mt-[52px] h-[99px] rounded-full bg-[#638aa8] text-[56px] font-semibold text-white">Acheter</button>
    </section>
  );
}

function SystemNav() {
  return (
    <div className="absolute inset-x-0 bottom-0 flex h-[140px] items-center justify-between pr-[226px] pl-[210px]">
      <button aria-label="Récents">
        <svg width="44" height="66" viewBox="0 -9 44 66" stroke="#fff" strokeOpacity="0.65" strokeWidth="4" strokeLinecap="round"><path d="M2 2 V46 M21 2 V46 M41 2 V46" /></svg>
      </button>
      <button aria-label="Accueil">
        <svg width="48" height="48" viewBox="0 0 48 48" fill="none"><rect x="3" y="3" width="42" height="42" rx="13" stroke="#fff" strokeOpacity="0.65" strokeWidth="4" /></svg>
      </button>
      <button aria-label="Retour">
        <svg width="28" height="50" viewBox="0 0 28 50" fill="none"><path d="M25 3 L3 25 L25 47" stroke="#fff" strokeOpacity="0.65" strokeWidth="4" strokeLinecap="round" /></svg>
      </button>
    </div>
  );
}

export default function App() {
  return (
    <div className="relative min-h-screen overflow-hidden bg-[#f5f4f5] font-[Lato,sans-serif]">
      <Halo />
      <header className="relative -mb-[44px]">
        <CityMap />
        <button aria-label="Réglages" className="absolute top-[104px] left-[48px] flex size-[120px] items-center justify-center rounded-full bg-white shadow-[0_6px_40px_rgba(0,0,0,0.3)]">
          <GearIcon />
        </button>
        <StatusBar />
      </header>
      <main className="relative">
        <div className="absolute inset-x-[48px] -top-[81px] h-[336px] rounded-[28px] shadow-[0_18px_70px_rgba(0,0,0,0.25)]" />
        <div className="relative flex flex-col rounded-t-[28px] bg-[#38ab30] pb-[9px]">
          <div className="pointer-events-none absolute inset-x-[48px] -top-[81px] h-[336px] rounded-[28px] shadow-[0_18px_60px_rgba(0,0,0,0.25)]" />
          <SearchCard />
          <div className="relative mx-[48px] mt-[60px] grid grid-cols-5 gap-[24px]">
            {tiles.map(([label, Icon]) => <Tile key={label} label={label} Icon={Icon} />)}
          </div>
          <AdCard />
          <button className="mt-[30px] mr-[66px] ml-auto flex h-[99px] items-center rounded-full border-[4px] border-white/50 px-[24px] text-[56px] font-semibold text-white">
            <svg width="54" height="38" viewBox="0 0 54 38" strokeLinejoin="round">
              <path d="M8 13 L15 6 L21 15 M33 15 L39 6 L46 13" fill="#4c6a80" stroke="#fff" strokeWidth="2" />
              <path d="M2 8 L17 16 L27 2 L37 16 L52 8 V33 Q27 38 2 33 Z" fill="#03304f" stroke="#fff" strokeWidth="2" />
              <path d="M2 28 Q27 32 52 28" fill="none" stroke="#7890a2" strokeWidth="1" />
            </svg>
            <span className="mr-[20px] ml-[18px]">ENLEVER LES PUBS</span>
            <svg width="22" height="36" viewBox="0 0 22 36"><path d="M6 6 L14 18 L6 30" fill="none" stroke="#9bd597" strokeWidth="9" strokeLinecap="round" strokeLinejoin="round" /></svg>
          </button>
          <SystemNav />
        </div>
      </main>
    </div>
  );
}
